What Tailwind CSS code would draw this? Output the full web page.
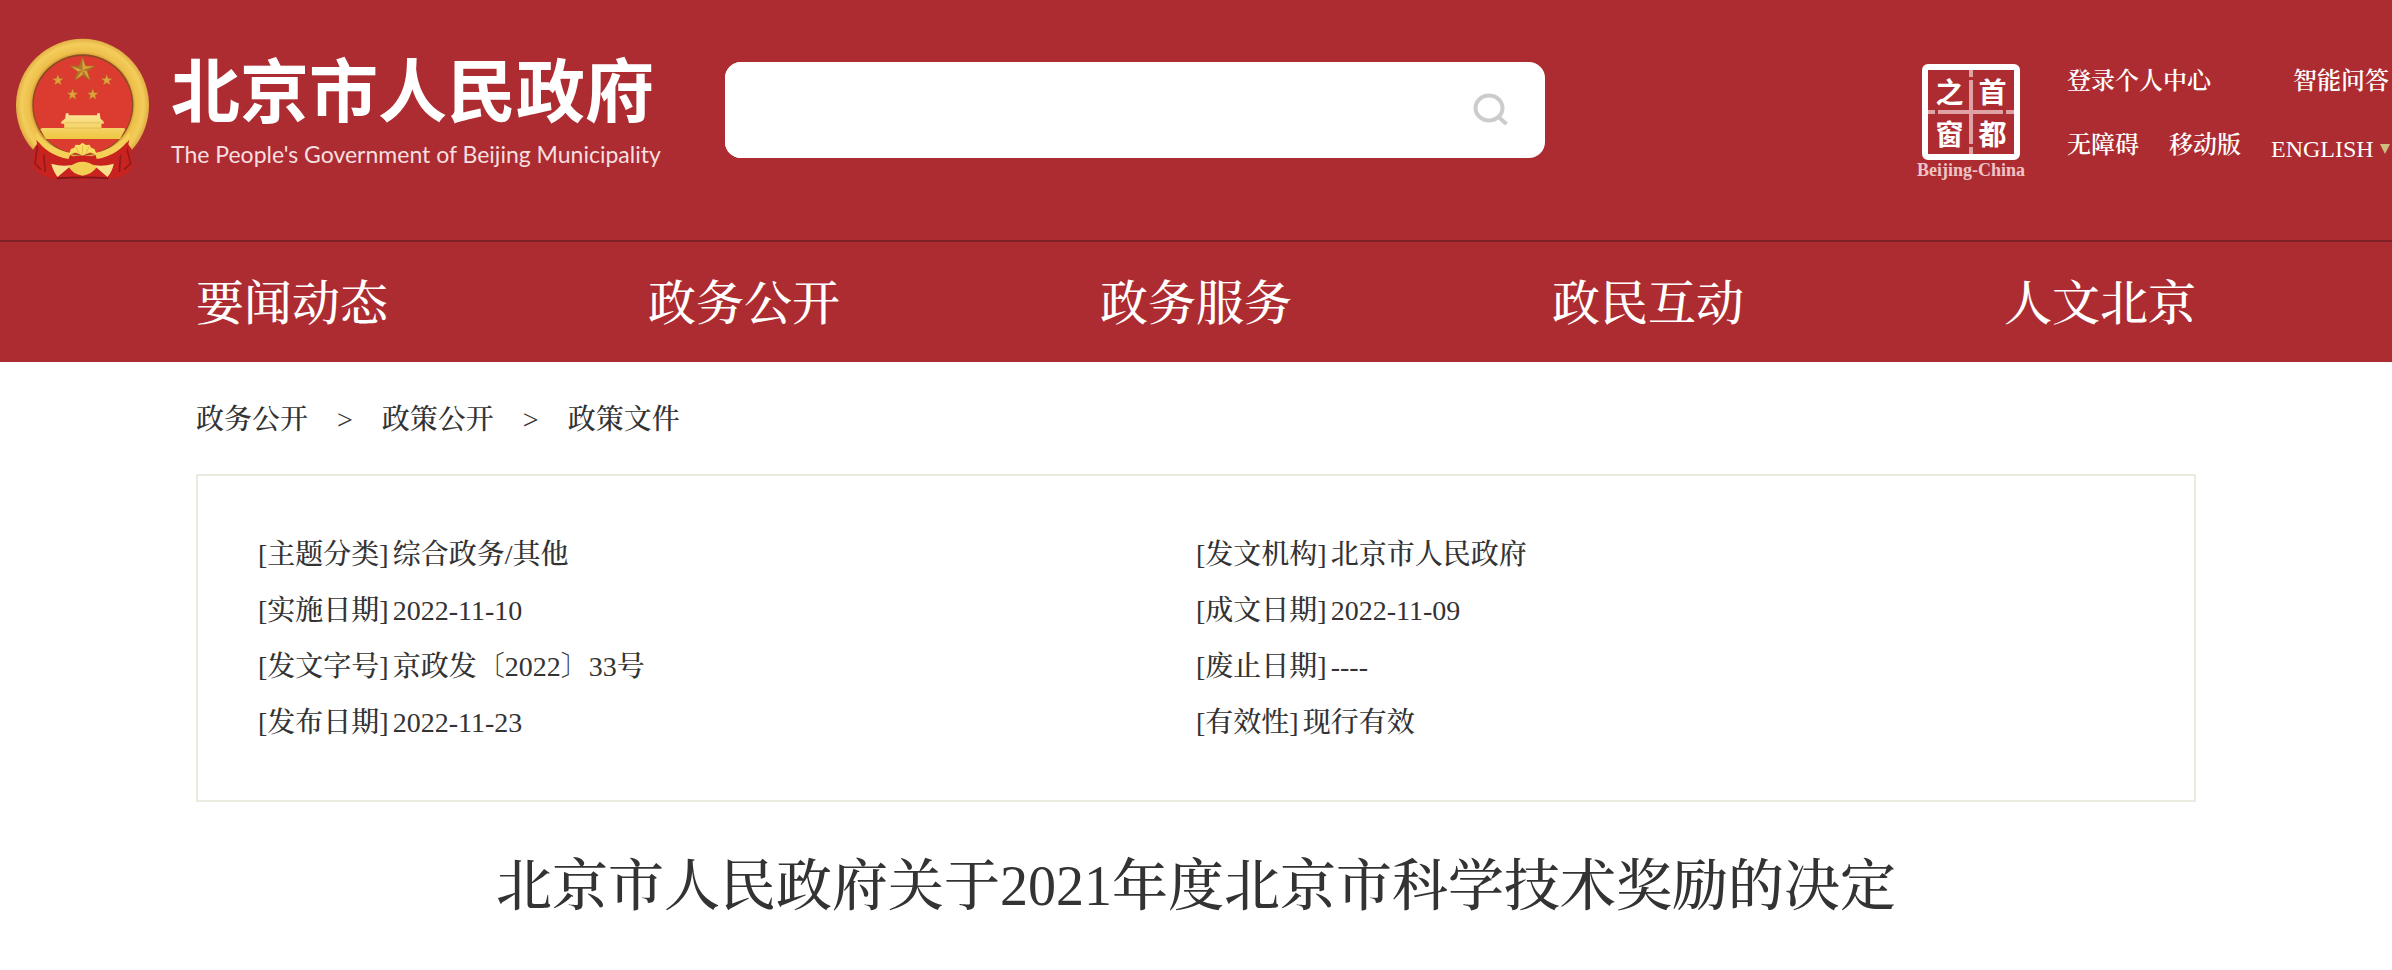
<!DOCTYPE html>
<html lang="zh-CN">
<head>
<meta charset="utf-8">
<meta name="viewport" content="width=device-width, initial-scale=1">
<title>北京市人民政府关于2021年度北京市科学技术奖励的决定</title>
<script src="https://cdn.jsdelivr.net/npm/@tailwindcss/browser@4"></script>
</head>
<body class="bg-white text-[#333333] font-medium font-['Liberation_Serif','Songti_SC','Noto_Serif_CJK_SC','Noto_Sans_CJK_SC',serif]">
<header class="bg-[#ad2c31] text-white">
  <div class="flex items-start border-b-2 border-[#7f2027] pb-[59px] pl-4">
    <a href="#" class="mt-[38px] flex shrink-0">
      <svg class="h-[143px] w-[133px]" viewBox="47 53 400 428" role="img" aria-label="国徽">
        <defs>
          <radialGradient id="gold" gradientUnits="userSpaceOnUse" cx="247" cy="253" r="200"><stop offset=".74" stop-color="#c9922f"/><stop offset=".8" stop-color="#eebf4b"/><stop offset=".92" stop-color="#f3cd5b"/><stop offset="1" stop-color="#e0ac42"/></radialGradient>
          <linearGradient id="gate" x1="0" y1="0" x2="0" y2="1"><stop offset="0" stop-color="#fbe59a"/><stop offset="1" stop-color="#efc63f"/></linearGradient>
          <path id="star" d="M0-10 2.4-3.1 9.5-3.1 3.8 1.2 5.9 8.1 0 4-5.9 8.1-3.8 1.2-9.5-3.1-2.4-3.1Z"/>
        </defs>
        <path d="M108 345 97 440Q122 470 160 476L200 470 247 480 295 470 340 476Q375 470 398 440L388 345Z" fill="#c8231f"/>
        <path d="M112 375 104 430 122 447M130 398 135 455M378 375 392 430 372 447M362 398 358 455" fill="none" stroke="#93191b" stroke-width="5"/>
        <path d="M98 388A200 200 0 1 1 396 388L380 365 247 420 114 365Z" fill="url(#gold)"/>
        <circle cx="248" cy="253" r="152" fill="#8e4a22"/>
        <circle cx="248" cy="254" r="148" fill="#dc3b30"/>
        <path d="M108 358Q150 410 205 412Q247 398 290 412Q345 410 388 358L380 390Q335 430 290 430L205 430Q155 430 114 388Z" fill="#c8231f"/>
        <path d="M109 335Q145 385 212 398L205 416Q140 405 105 352ZM387 335Q350 385 284 398L290 416Q355 405 390 352Z" fill="#f5cf57"/>
        <g fill="#dca43a" stroke="#a96424" stroke-width=".5">
          <use href="#star" transform="translate(247 148) scale(3.9)"/>
          <use href="#star" transform="translate(173 179) scale(1.8)"/>
          <use href="#star" transform="translate(320 179) scale(1.8)"/>
          <use href="#star" transform="translate(217 222) scale(1.8)"/>
          <use href="#star" transform="translate(278 222) scale(1.8)"/>
        </g>
        <path d="M247 109V148L238 136ZM247 148 284 136 262 153ZM247 148 270 181 247 164ZM247 148 224 181 232 153ZM247 148 210 136 238 136Z" fill="#8c5a1e" opacity=".6"/>
        <path d="M197 278H205V284H291V278H299L301 294 311 304V310H304V323H370L376 326 360 356H136L120 326 126 323H192V310H183V304L195 294Z" fill="url(#gate)"/>
        <path d="M196 307H300M190 323H306" stroke="#dfb14a" stroke-width="2" fill="none"/>
        <path d="M206 404 212 386 222 382 226 373 238 374 247 367 257 374 268 373 273 382 283 386 290 404 270 396 247 405 226 396Z" fill="#f8dc5f"/>
        <path d="M247 400V376M236 398 228 380M258 398 266 380" stroke="#d9a83c" stroke-width="2"/>
        <path d="M206 440Q228 424 247 424T290 440Q276 462 247 466Q218 462 206 440Z" fill="#f3ce52"/>
        <path d="M153 430Q185 440 215 434L172 470Q160 455 153 430ZM341 430Q310 440 280 434L322 470Q336 455 341 430Z" fill="#f8e08a"/>
        <path d="M170 474Q247 468 325 474" stroke="#7e1719" stroke-width="5" fill="none"/>
      </svg>
      <span class="ml-[22px] mt-3 flex flex-col whitespace-nowrap font-['Noto_Sans_CJK_SC',sans-serif]">
        <span class="text-[69px] font-bold leading-[74px]">北京市人民政府</span>
        <span class="mt-[14px] font-['Lato',sans-serif] text-[23px] leading-8 text-[#f6dfe0] font-normal">The People's Government of Beijing Municipality</span>
      </span>
    </a>
    <form class="mt-[62px] ml-16 flex h-24 w-[820px] items-center rounded-2xl bg-white pr-9">
      <input type="search" aria-label="搜索" class="h-full min-w-0 flex-1 rounded-2xl bg-white px-6 text-[28px] text-[#333333] outline-none">
      <button type="button" aria-label="搜索" class="flex">
        <svg class="h-9 w-9" viewBox="0 0 36 36" fill="none" stroke="#cccccc" stroke-width="4"><ellipse cx="16" cy="16" rx="13.5" ry="12.5"/><path d="M25.5 25 33.5 32"/></svg>
      </button>
    </form>
    <div class="mt-[64px] ml-auto flex shrink-0">
      <a href="#" class="flex w-[108px] flex-col items-center">
        <span class="relative grid h-24 w-[98px] grid-cols-2 grid-rows-2 place-items-center rounded-md border-[6px] border-white font-['Noto_Sans_CJK_SC',sans-serif] text-[28px] font-bold leading-[42px]">
          <span>之</span><span>首</span><span>窗</span><span>都</span>
          <svg class="absolute inset-0 h-full w-full" viewBox="0 0 86 84" stroke="#dfa3a6" stroke-width="4" fill="none" aria-hidden="true"><path d="M43 0V7M43 10V74M43 77V84M0 42H7M10 42H75M78 42H86"/></svg>
        </span>
        <span class="whitespace-nowrap text-[18px] font-bold leading-5 text-[#eec5c7]">Beijing-China</span>
      </a>
      <nav class="ml-[42px] w-[325px] pt-px text-2xl font-semibold leading-8" aria-label="快捷入口">
        <div class="flex justify-between pr-[3px]"><a href="#">登录个人中心</a><a href="#">智能问答</a></div>
        <div class="mt-8 flex"><a href="#">无障碍</a><a href="#" class="ml-[30px]">移动版</a><a href="#" class="ml-[30px] flex items-center pt-1 font-normal">ENGLISH<svg class="ml-[6px] h-[10px] w-[10px]" viewBox="0 0 10 10" aria-hidden="true"><path d="M0 0H10L5 10Z" fill="#cfbd80"/></svg></a></div>
      </nav>
    </div>
  </div>
  <nav class="mx-auto flex max-w-[2000px] justify-between pt-[26px] pb-[22px] text-[48px] leading-[72px]" aria-label="主导航">
    <a href="#">要闻动态</a><a href="#">政务公开</a><a href="#">政务服务</a><a href="#">政民互动</a><a href="#">人文北京</a>
  </nav>
</header>
<main class="mx-auto max-w-[2000px]">
  <nav class="flex gap-[29px] pt-[38px] text-[28px] leading-10" aria-label="面包屑">
    <a href="#">政务公开</a><span>&gt;</span><a href="#">政策公开</a><span>&gt;</span><a href="#">政策文件</a>
  </nav>
  <dl class="mt-[34px] grid grid-cols-2 border-2 border-[#ebebe0] px-[60px] pt-[51px] pb-[49px] text-[28px] leading-[56px]">
    <div class="flex gap-1"><dt>[主题分类]</dt><dd>综合政务/其他</dd></div>
    <div class="flex gap-1"><dt>[发文机构]</dt><dd>北京市人民政府</dd></div>
    <div class="flex gap-1"><dt>[实施日期]</dt><dd>2022-11-10</dd></div>
    <div class="flex gap-1"><dt>[成文日期]</dt><dd>2022-11-09</dd></div>
    <div class="flex gap-1"><dt>[发文字号]</dt><dd>京政发〔2022〕33号</dd></div>
    <div class="flex gap-1"><dt>[废止日期]</dt><dd>----</dd></div>
    <div class="flex gap-1"><dt>[发布日期]</dt><dd>2022-11-23</dd></div>
    <div class="flex gap-1"><dt>[有效性]</dt><dd>现行有效</dd></div>
  </dl>
  <h1 class="pt-11 pb-10 text-center text-[56px] font-medium leading-[80px]">北京市人民政府关于2021年度北京市科学技术奖励的决定</h1>
</main>
</body>
</html>
